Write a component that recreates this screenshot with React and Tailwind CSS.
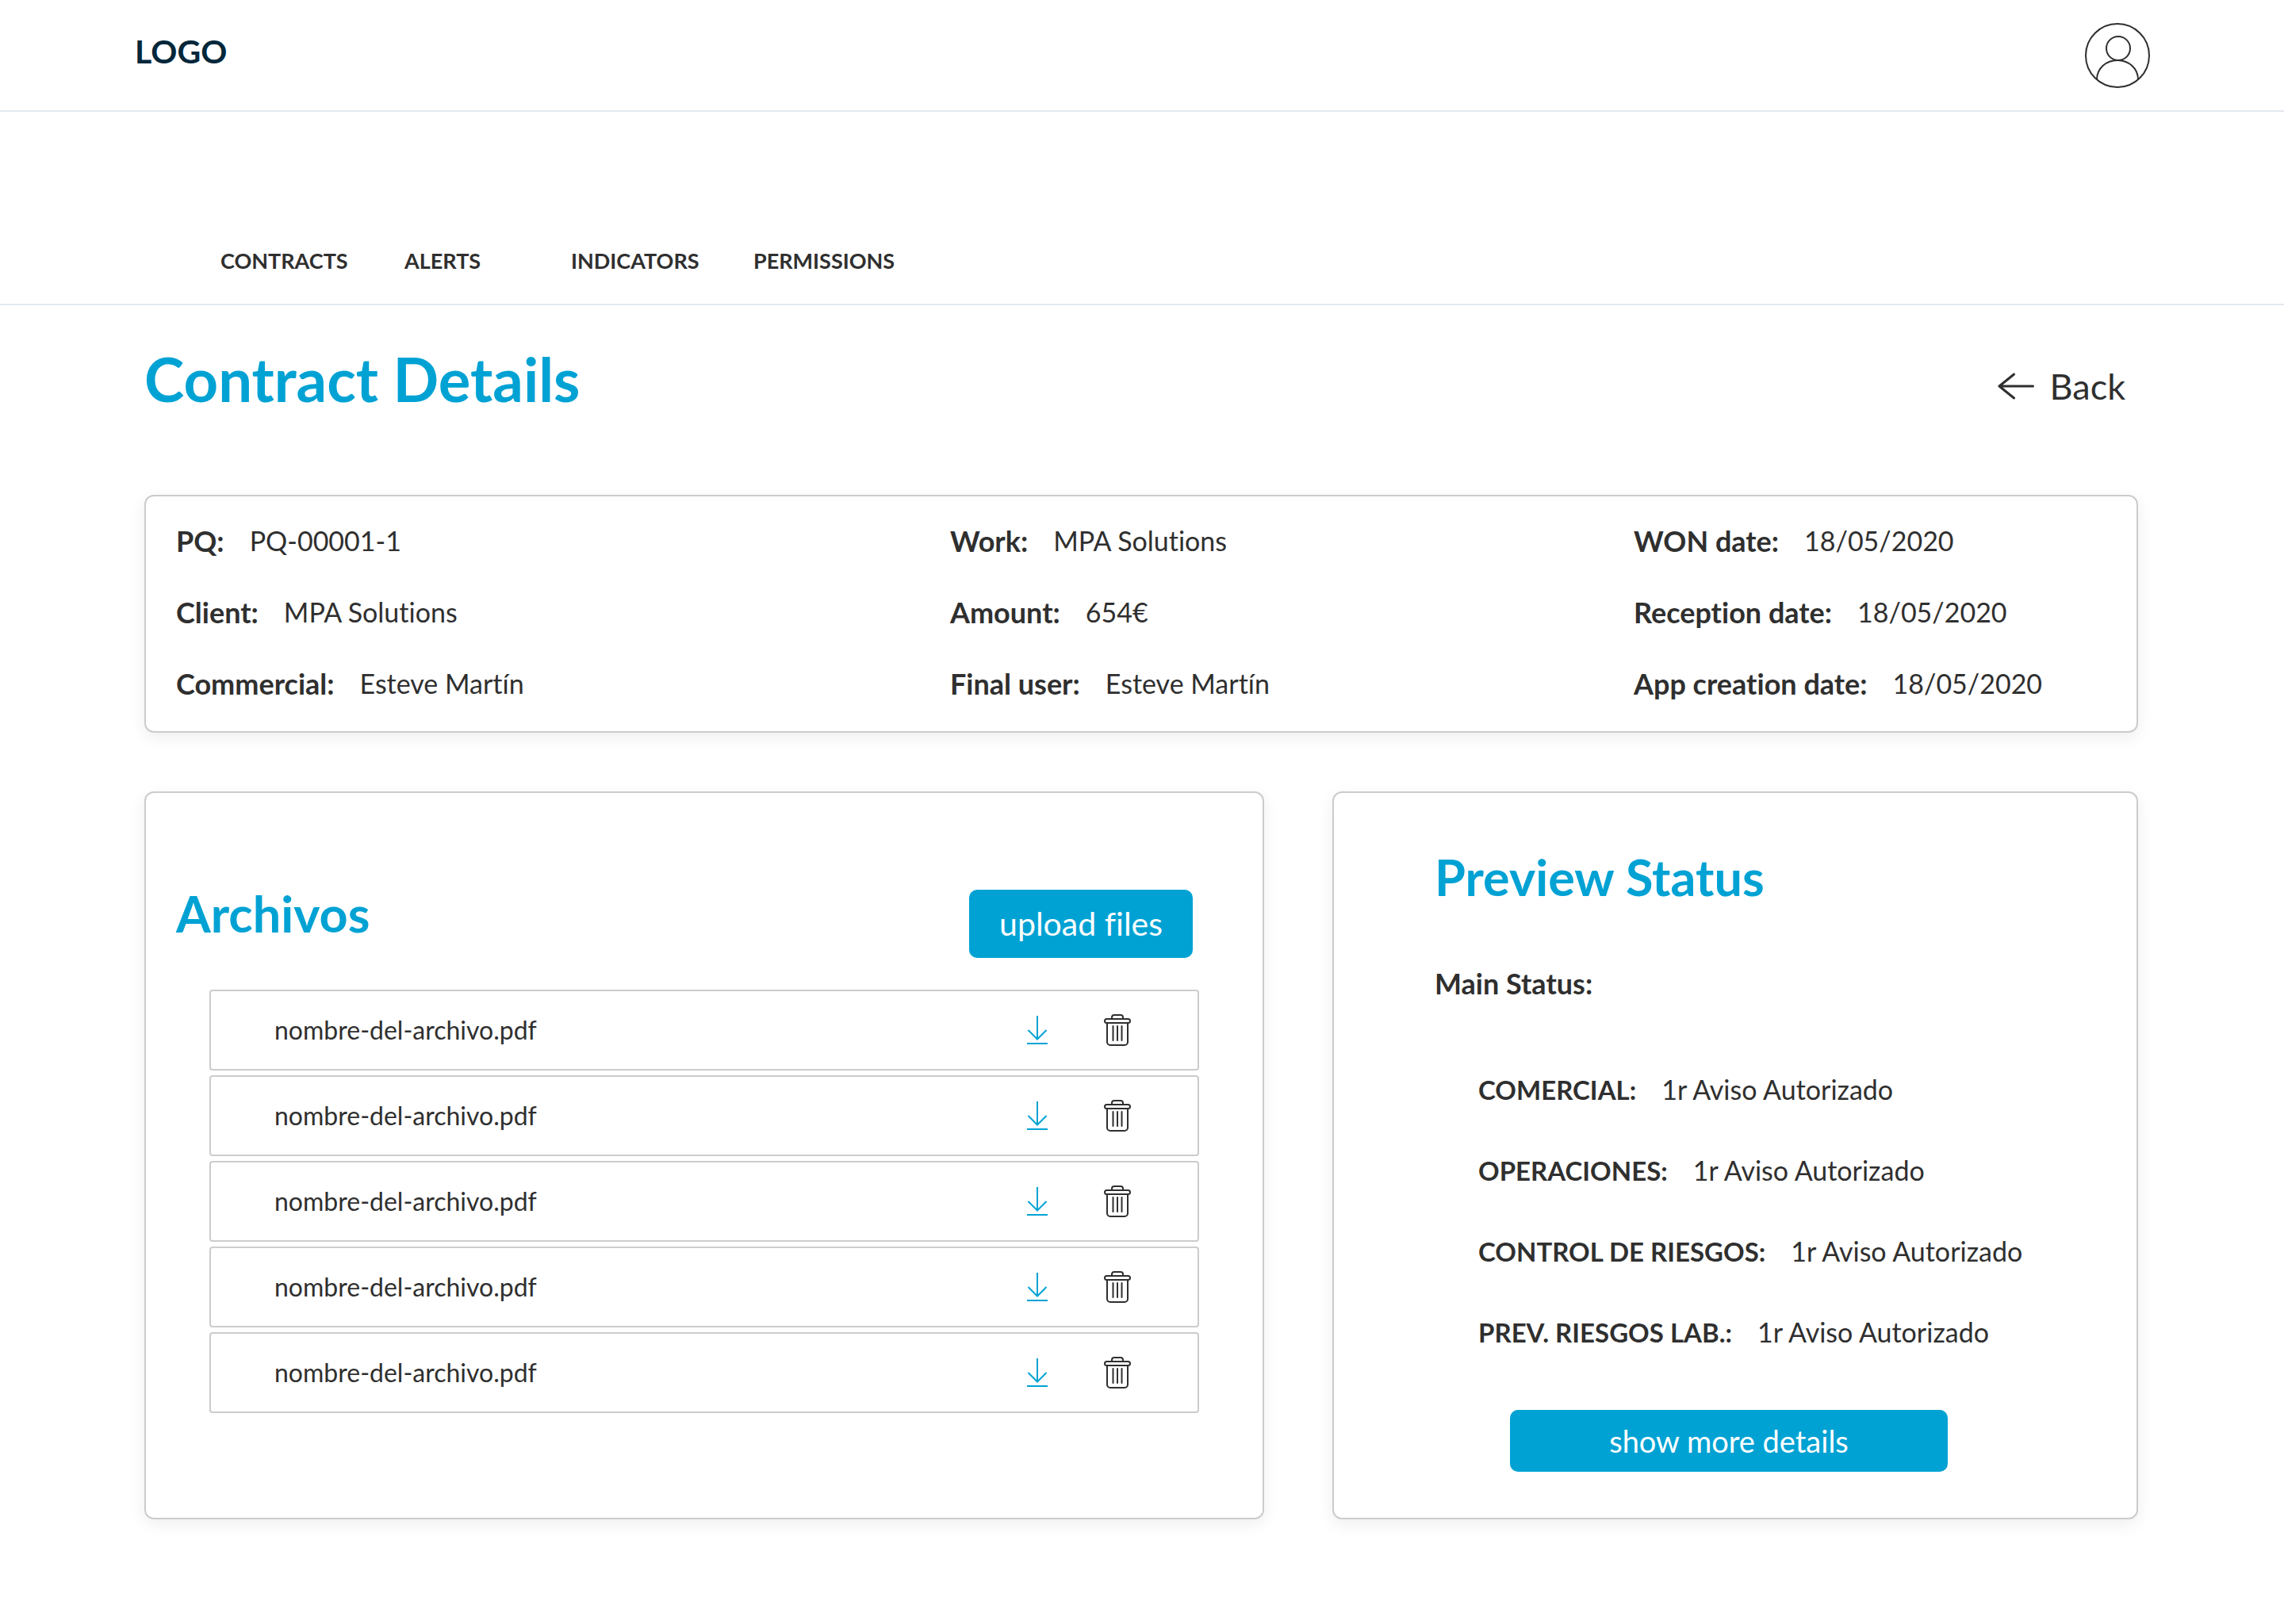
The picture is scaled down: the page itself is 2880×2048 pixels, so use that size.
const NAV = ["CONTRACTS", "ALERTS", "INDICATORS", "PERMISSIONS"];

const DETAILS = [
  [
    ["PQ:", "PQ-00001-1"],
    ["Client:", "MPA Solutions"],
    ["Commercial:", "Esteve Martín"],
  ],
  [
    ["Work:", "MPA Solutions"],
    ["Amount:", "654€"],
    ["Final user:", "Esteve Martín"],
  ],
  [
    ["WON date:", "18/05/2020"],
    ["Reception date:", "18/05/2020"],
    ["App creation date:", "18/05/2020"],
  ],
];

const FILES = [1, 2, 3, 4, 5].map((id) => ({ id, name: "nombre-del-archivo.pdf" }));

const STATUSES = [
  ["COMERCIAL:", "1r Aviso Autorizado"],
  ["OPERACIONES:", "1r Aviso Autorizado"],
  ["CONTROL DE RIESGOS:", "1r Aviso Autorizado"],
  ["PREV. RIESGOS LAB.:", "1r Aviso Autorizado"],
];

function UserIcon() {
  return (
    <svg viewBox="0 0 82 82" className="size-[82px]" fill="none" stroke="currentColor" strokeWidth="2" aria-hidden="true">
      <circle cx="41" cy="41" r="40" />
      <circle cx="42" cy="32" r="15" />
      <path d="M15 71.500C15 57 27 47 41 47s26 10 26 24.500" />
    </svg>
  );
}

function ArrowLeftIcon() {
  return (
    <svg viewBox="0 0 46 34" className="h-[34px] w-[46px]" fill="none" stroke="currentColor" strokeWidth="3" strokeLinecap="round" strokeLinejoin="round" aria-hidden="true">
      <path d="M44.500 17H2M20.500 2 2 17l18.500 15" />
    </svg>
  );
}

function DownloadIcon() {
  return (
    <svg viewBox="0 0 26 36" className="h-9 w-[26px]" fill="none" stroke="currentColor" strokeWidth="2" aria-hidden="true">
      <path d="M13 0v30M1.500 18 13 29.500 24.500 18M0 35h26" />
    </svg>
  );
}

function TrashIcon() {
  return (
    <svg viewBox="0 0 34 40" className="h-10 w-[34px]" fill="none" stroke="currentColor" strokeWidth="2" strokeLinecap="round" aria-hidden="true">
      <path d="M10 5.500V4a3 3 0 0 1 3-3h8a3 3 0 0 1 3 3v1.500" />
      <rect x="1" y="6" width="32" height="5" rx="2.500" />
      <path d="M4 11.500V35a4 4 0 0 0 4 4h18a4 4 0 0 0 4-4V11.500" />
      <path d="M11.500 15v18M17 15v18M22.500 15v18" />
    </svg>
  );
}

const CARD = "rounded-xl border-2 border-[#cccccc] bg-white shadow-[0_6px_20px_rgba(0,0,0,0.07)]";
const HEADING = "text-[63px] leading-[72px] font-bold text-[#00a2d4]";

export default function App() {
  return (
    <div className="bg-white font-['Lato',sans-serif] text-[#2f2f2f] [font-variant-ligatures:none]">
      <header className="flex items-start justify-between border-b-2 border-[#e3e8f0] pt-[29px] pr-[169px] pb-7 pl-[170px]">
        <a href="#home" className="py-3 text-[41px] leading-[48px] font-bold text-[#04273b]">LOGO</a>
        <button type="button" aria-label="Account">
          <UserIcon />
        </button>
      </header>

      <nav className="grid grid-cols-[232px_210px_230px_auto] border-b-2 border-[#e3e8f0] pt-[170px] pb-9 pl-[278px] text-[27px] leading-9 font-bold">
        {NAV.map((item) => (
          <a key={item} href={"#" + item.toLowerCase()}>{item}</a>
        ))}
      </nav>

      <main className="pt-[53px] pr-[184px] pb-[132px] pl-[182px]">
        <div className="flex items-end justify-between pr-4">
          <h1 className="text-[76px] leading-[80px] font-bold text-[#00a2d4]">Contract Details</h1>
          <a href="#contracts" className="flex items-center gap-5 pb-[7px] text-[45px] leading-[48px]">
            <ArrowLeftIcon />
            Back
          </a>
        </div>

        <section className={CARD + " mt-[106px] grid grid-cols-[976fr_862fr_634fr] pt-[31px] pb-[35px] pl-[38px]"}>
          {DETAILS.map((column, i) => (
            <dl key={i} className="flex flex-col gap-10 leading-[50px]">
              {column.map(([label, value]) => (
                <div key={label} className="flex items-center gap-8">
                  <dt className="text-[36px] font-bold">{label}</dt>
                  <dd className="text-[34px]">{value}</dd>
                </div>
              ))}
            </dl>
          ))}
        </section>

        <div className="mt-[74px] grid grid-cols-[1412fr_1016fr] gap-[86px]">
          <section className={CARD + " pt-[116px] pb-[132px]"}>
            <div className="flex items-end justify-between pr-[88px] pl-[38px]">
              <h2 className={HEADING + " mb-5"}>Archivos</h2>
              <button type="button" className="h-[86px] rounded-[10px] bg-[#00a2d4] px-[38px] text-[41px] leading-[48px] text-white">
                upload files
              </button>
            </div>
            <ul className="mt-10 flex flex-col gap-[6px] px-20">
              {FILES.map((file) => (
                <li key={file.id} className="flex h-[102px] items-center rounded border-2 border-[#cccccc] pr-[84px] pl-20">
                  <span className="flex-1 text-[32px] leading-10">{file.name}</span>
                  <button type="button" aria-label={"Download " + file.name} className="mr-[71px] text-[#00a2d4]">
                    <DownloadIcon />
                  </button>
                  <button type="button" aria-label={"Delete " + file.name}>
                    <TrashIcon />
                  </button>
                </li>
              ))}
            </ul>
          </section>

          <section className={CARD + " pt-[70px] pb-[58px] pl-[127px]"}>
            <h2 className={HEADING}>Preview Status</h2>
            <h3 className="mt-[73px] text-[36px] leading-[50px] font-bold">Main Status:</h3>
            <dl className="mt-[84px] flex flex-col gap-[52px] pl-[55px] leading-[50px]">
              {STATUSES.map(([label, value]) => (
                <div key={label} className="flex items-center gap-8">
                  <dt className="text-[33px] font-bold">{label}</dt>
                  <dd className="text-[34px]">{value}</dd>
                </div>
              ))}
            </dl>
            <div className="mt-[73px] pr-[238px] pl-[95px]">
              <button type="button" className="h-[78px] w-full rounded-[10px] bg-[#00a2d4] text-[38px] leading-[48px] text-white">
                show more details
              </button>
            </div>
          </section>
        </div>
      </main>
    </div>
  );
}
